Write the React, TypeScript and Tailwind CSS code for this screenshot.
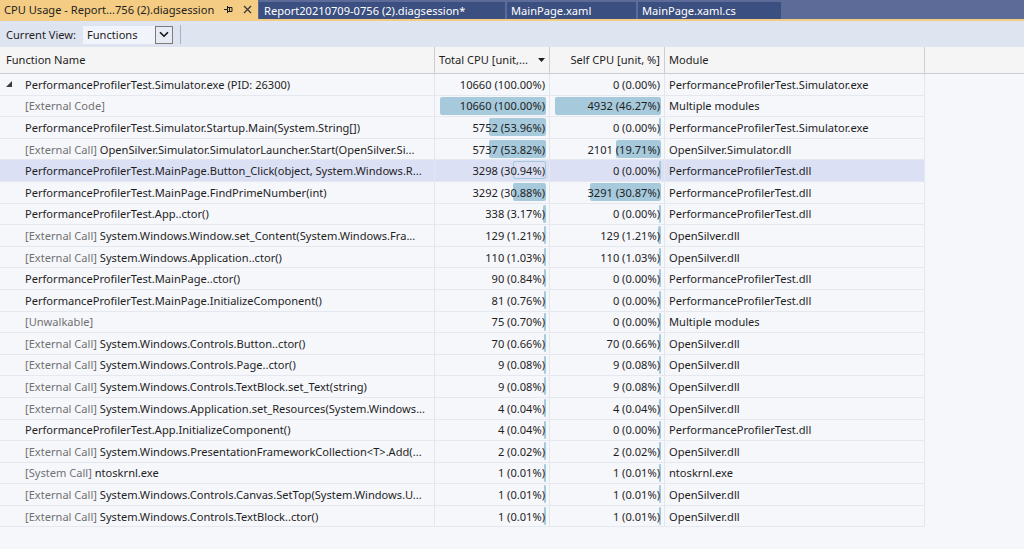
import React from "react";

interface Row {
    pre?: string;
    name: string;
    tot: number;
    totP: string;
    self: number;
    selfP: string;
    mod: string;
    root?: boolean;
    selected?: boolean;
}

const rows: Row[] = [
    { name: "PerformanceProfilerTest.Simulator.exe (PID: 26300)", tot: 10660, totP: "100.00", self: 0, selfP: "0.00", mod: "PerformanceProfilerTest.Simulator.exe", root: true },
    { pre: "[External Code]", name: "", tot: 10660, totP: "100.00", self: 4932, selfP: "46.27", mod: "Multiple modules" },
    { name: "PerformanceProfilerTest.Simulator.Startup.Main(System.String[])", tot: 5752, totP: "53.96", self: 0, selfP: "0.00", mod: "PerformanceProfilerTest.Simulator.exe" },
    { pre: "[External Call]", name: "OpenSilver.Simulator.SimulatorLauncher.Start(OpenSilver.Si...", tot: 5737, totP: "53.82", self: 2101, selfP: "19.71", mod: "OpenSilver.Simulator.dll" },
    { name: "PerformanceProfilerTest.MainPage.Button_Click(object, System.Windows.R...", tot: 3298, totP: "30.94", self: 0, selfP: "0.00", mod: "PerformanceProfilerTest.dll", selected: true },
    { name: "PerformanceProfilerTest.MainPage.FindPrimeNumber(int)", tot: 3292, totP: "30.88", self: 3291, selfP: "30.87", mod: "PerformanceProfilerTest.dll" },
    { name: "PerformanceProfilerTest.App..ctor()", tot: 338, totP: "3.17", self: 0, selfP: "0.00", mod: "PerformanceProfilerTest.dll" },
    { pre: "[External Call]", name: "System.Windows.Window.set_Content(System.Windows.Fra...", tot: 129, totP: "1.21", self: 129, selfP: "1.21", mod: "OpenSilver.dll" },
    { pre: "[External Call]", name: "System.Windows.Application..ctor()", tot: 110, totP: "1.03", self: 110, selfP: "1.03", mod: "OpenSilver.dll" },
    { name: "PerformanceProfilerTest.MainPage..ctor()", tot: 90, totP: "0.84", self: 0, selfP: "0.00", mod: "PerformanceProfilerTest.dll" },
    { name: "PerformanceProfilerTest.MainPage.InitializeComponent()", tot: 81, totP: "0.76", self: 0, selfP: "0.00", mod: "PerformanceProfilerTest.dll" },
    { pre: "[Unwalkable]", name: "", tot: 75, totP: "0.70", self: 0, selfP: "0.00", mod: "Multiple modules" },
    { pre: "[External Call]", name: "System.Windows.Controls.Button..ctor()", tot: 70, totP: "0.66", self: 70, selfP: "0.66", mod: "OpenSilver.dll" },
    { pre: "[External Call]", name: "System.Windows.Controls.Page..ctor()", tot: 9, totP: "0.08", self: 9, selfP: "0.08", mod: "OpenSilver.dll" },
    { pre: "[External Call]", name: "System.Windows.Controls.TextBlock.set_Text(string)", tot: 9, totP: "0.08", self: 9, selfP: "0.08", mod: "OpenSilver.dll" },
    { pre: "[External Call]", name: "System.Windows.Application.set_Resources(System.Windows...", tot: 4, totP: "0.04", self: 4, selfP: "0.04", mod: "OpenSilver.dll" },
    { name: "PerformanceProfilerTest.App.InitializeComponent()", tot: 4, totP: "0.04", self: 0, selfP: "0.00", mod: "PerformanceProfilerTest.dll" },
    { pre: "[External Call]", name: "System.Windows.PresentationFrameworkCollection<T>.Add(...", tot: 2, totP: "0.02", self: 2, selfP: "0.02", mod: "OpenSilver.dll" },
    { pre: "[System Call]", name: "ntoskrnl.exe", tot: 1, totP: "0.01", self: 1, selfP: "0.01", mod: "ntoskrnl.exe" },
    { pre: "[External Call]", name: "System.Windows.Controls.Canvas.SetTop(System.Windows.U...", tot: 1, totP: "0.01", self: 1, selfP: "0.01", mod: "OpenSilver.dll" },
    { pre: "[External Call]", name: "System.Windows.Controls.TextBlock..ctor()", tot: 1, totP: "0.01", self: 1, selfP: "0.01", mod: "OpenSilver.dll" },
];

const BAR_MAX = 106;
const maxSelf = 4932;

function Bar({ width, outline }: { width: number; outline?: boolean }) {
    const w = Math.max(2, Math.round(width));
    return (
        <div
            className={
                outline
                    ? "absolute right-[3px] top-[1px] h-[18px] rounded-[2px] border border-[#a6c8dc]"
                    : "absolute right-[3px] top-[1px] h-[18px] rounded-[2px] bg-[#a6c9dc]"
            }
            style={{ width: w }}
        />
    );
}

function NumCell({ text, width, showBar, outline }: { text: string; width: number; showBar: boolean; outline?: boolean }) {
    return (
        <div className="relative flex items-center justify-end pr-[4px] border-r border-[#e4e6ee]">
            {showBar && <Bar width={width} outline={outline} />}
            <span className="relative whitespace-nowrap">{text}</span>
        </div>
    );
}

export default function App() {
    return (
        <div className="w-[1024px] h-[549px] overflow-hidden bg-[#f6f7fb] text-[#1e1e1e] font-['Noto_Sans',sans-serif] text-[11.1px] leading-none">
            {/* document tabs */}
            <div className="flex items-end h-[19px] bg-[#5d6b99]">
                <div className="flex items-center h-[19px] w-[258px] bg-[#f5cc84] pl-[4px] pr-[6px]">
                    <span className="whitespace-nowrap">CPU Usage - Report...756 (2).diagsession</span>
                    <svg className="ml-auto shrink-0" width="9" height="9" viewBox="0 0 9 9" fill="none" stroke="#1e1e1e" strokeWidth="1">
                        <path d="M0 4.5h3M3.5 1v7M3.5 2.5h4.5v4H3.5M5.5 2.5v4" />
                    </svg>
                    <svg className="ml-[10px] shrink-0" width="9" height="9" viewBox="0 0 9 9" fill="none" stroke="#3a3a3a" strokeWidth="1.3">
                        <path d="M1 1l7 7M8 1l-7 7" />
                    </svg>
                </div>
                <div className="ml-[1px] flex items-center h-[17px] w-[246px] bg-[#3b4f81] text-white pl-[5px] whitespace-nowrap">
                    Report20210709-0756 (2).diagsession*
                </div>
                <div className="ml-[2px] flex items-center h-[17px] w-[129px] bg-[#3b4f81] text-white pl-[4px] whitespace-nowrap">
                    MainPage.xaml
                </div>
                <div className="ml-[2px] flex items-center h-[17px] w-[143px] bg-[#3b4f81] text-white pl-[4px] whitespace-nowrap">
                    MainPage.xaml.cs
                </div>
            </div>
            <div className="h-[2px] bg-[#f5cc84]" />

            {/* toolbar */}
            <div className="flex items-center h-[26px] bg-[#dfe4f1] pl-[6px] pt-[1px]">
                <span className="w-[77px] whitespace-nowrap">Current View:</span>
                <div className="flex h-[18px] w-[90px]">
                    <div className="flex items-center flex-1 bg-[#f1f4fa] pl-[4px]">Functions</div>
                    <div className="flex items-center justify-center w-[18px] border border-[#7c7c7c] bg-[#e8ebf3]">
                        <svg width="10" height="7" viewBox="0 0 10 7" fill="none" stroke="#111" strokeWidth="1.6">
                            <path d="M1 1.2l4 4 4-4" />
                        </svg>
                    </div>
                </div>
                <div className="ml-[7px] w-px h-[19px] bg-[#a5b0cc]" />
            </div>

            {/* header */}
            <div className="flex h-[27px] bg-[#f5f5f5] border-b border-[#cbcdd8]">
                <div className="grid grid-cols-[435px_115px_115px_260px] h-full">
                    <div className="flex items-center pl-[6px] border-r border-[#cbcdd8]">Function Name</div>
                    <div className="flex items-center pl-[4px] pr-[4px] border-r border-[#cbcdd8]">
                        <span className="whitespace-nowrap">Total CPU [unit,...</span>
                        <svg className="ml-auto" width="7" height="4" viewBox="0 0 7 4">
                            <path d="M0 0h7L3.5 4z" fill="#1e1e1e" />
                        </svg>
                    </div>
                    <div className="flex items-center justify-end pr-[4px] border-r border-[#cbcdd8] whitespace-nowrap">Self CPU [unit, %]</div>
                    <div className="flex items-center pl-[4px] border-r border-[#cbcdd8]">Module</div>
                </div>
            </div>

            {/* rows */}
            <div className="w-[925px]">
                {rows.map((r, i) => (
                    <div
                        key={i}
                        className={
                            "grid grid-cols-[435px_115px_115px_260px] h-[21.6px] border-b border-[#e6e8ef] " +
                            (r.selected ? "bg-[#dce0f5]" : "")
                        }
                    >
                        <div className="flex items-center border-r border-[#e4e6ee] whitespace-nowrap overflow-hidden">
                            <div className="w-[25px] shrink-0 flex justify-center">
                                {r.root && (
                                    <svg width="6" height="6" viewBox="0 0 6 6" className="ml-[-8px]">
                                        <path d="M6 0v6H0z" fill="#3c3c3c" />
                                    </svg>
                                )}
                            </div>
                            {r.pre && <span className="shrink-0 text-[#717171]">{r.pre}</span>}
                            {r.pre && r.name && <span className="shrink-0">&nbsp;</span>}
                            {r.name && <span className="shrink-0">{r.name}</span>}
                        </div>
                        <NumCell
                            text={`${r.tot} (${r.totP}%)`}
                            width={(parseFloat(r.totP) / 100) * BAR_MAX}
                            showBar={!r.root}
                            outline={r.selected}
                        />
                        <NumCell
                            text={`${r.self} (${r.selfP}%)`}
                            width={(r.self / maxSelf) * BAR_MAX}
                            showBar={!r.root}
                        />
                        <div className="flex items-center pl-[4px] border-r border-[#e4e6ee] whitespace-nowrap overflow-hidden">{r.mod}</div>
                    </div>
                ))}
            </div>
        </div>
    );
}
